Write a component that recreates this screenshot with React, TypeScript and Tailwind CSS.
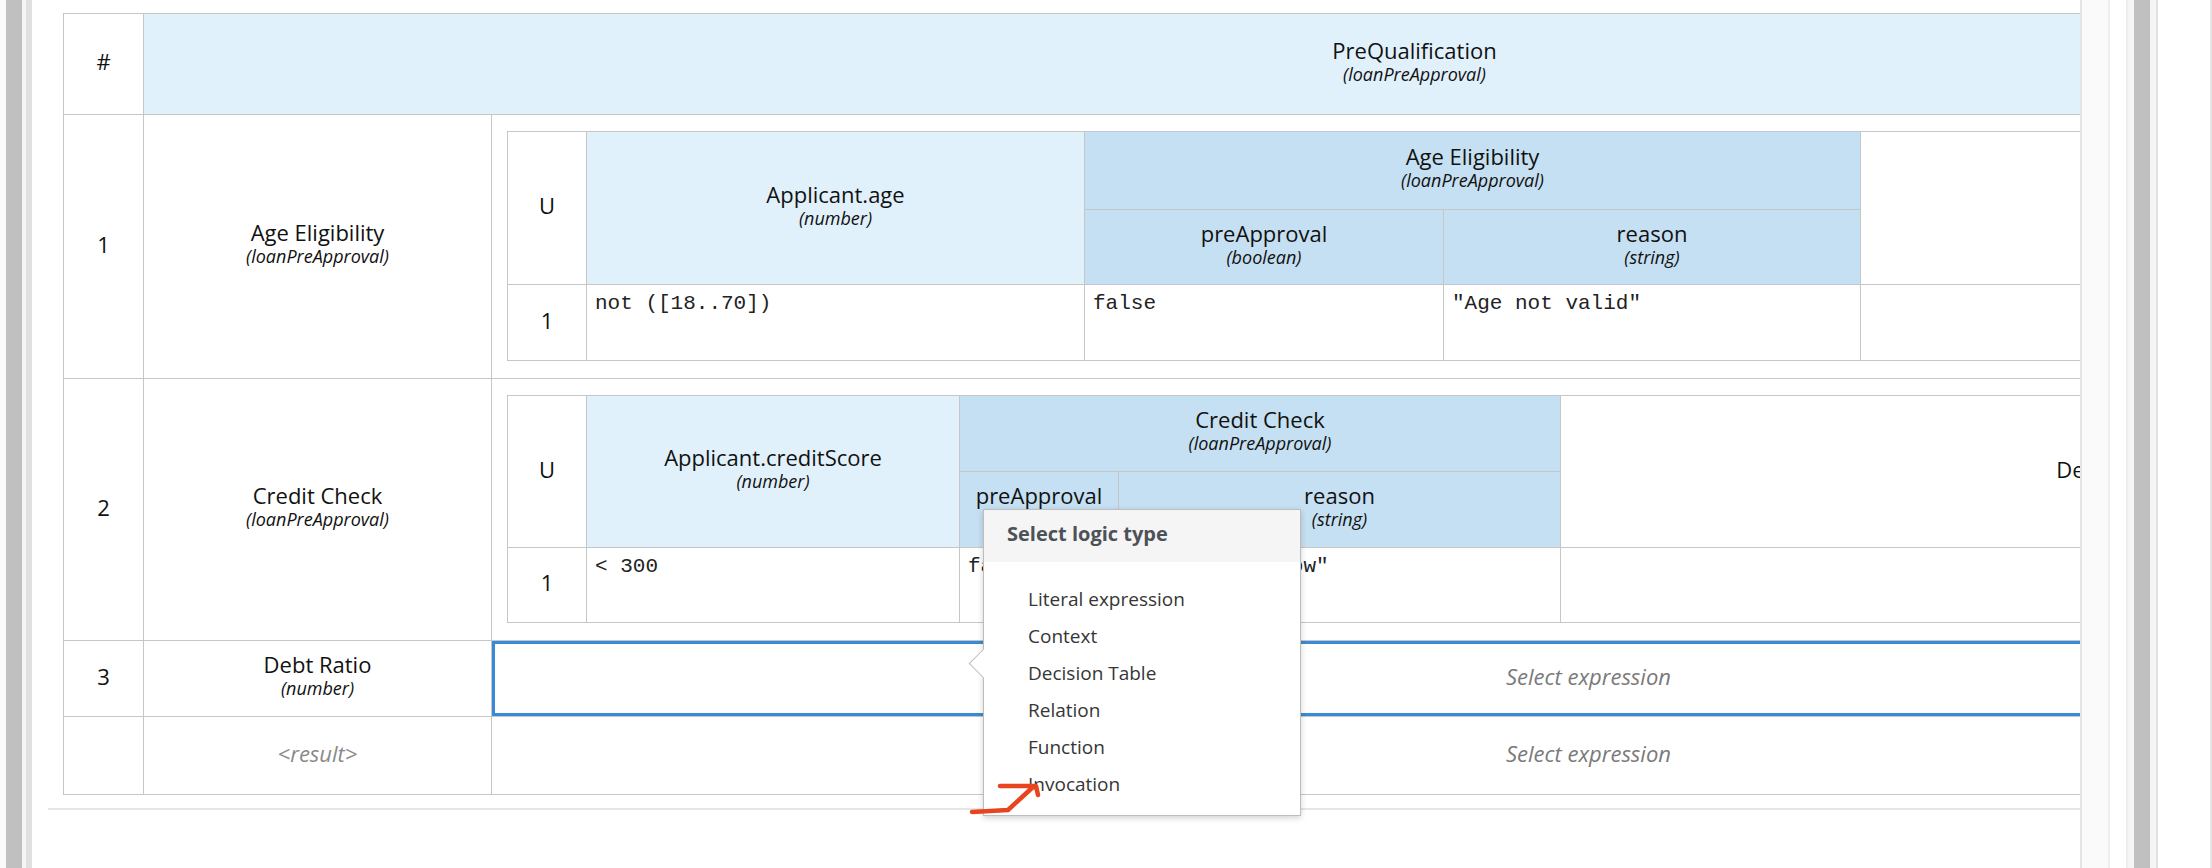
import React from "react";

const cell = "border border-[#c6c6c6]";
const inputHead = "bg-[#e1f1fc]";
const outputHead = "bg-[#c5e0f2]";
const label = "text-center text-[22px] pb-[5px]";

function Title({ name, type }: { name: string; type: string }) {
  return (
    <div className="flex flex-col items-center pb-[7px]">
      <span className="text-[22px] leading-[26px]">{name}</span>
      <span className="text-[18px] leading-[22px] italic">{type}</span>
    </div>
  );
}

const mono = "font-['Liberation_Mono',monospace] text-[21px] leading-[24px] text-[#222] align-top pt-[7px] px-[8px]";

function AgeTable() {
  return (
    <table className="table-fixed border-collapse w-full">
      <colgroup>
        <col className="w-[79px]" />
        <col className="w-[498px]" />
        <col className="w-[359px]" />
        <col className="w-[417px]" />
        <col />
      </colgroup>
      <tbody>
        <tr className="h-[78px]">
          <td rowSpan={2} className={`${cell} ${label}`}>U</td>
          <td rowSpan={2} className={`${cell} ${inputHead}`}>
            <Title name="Applicant.age" type="(number)" />
          </td>
          <td colSpan={2} className={`${cell} ${outputHead}`}>
            <Title name="Age Eligibility" type="(loanPreApproval)" />
          </td>
          <td rowSpan={2} className={`${cell} ${label}`}>Description</td>
        </tr>
        <tr className="h-[75px]">
          <td className={`${cell} ${outputHead}`}>
            <Title name="preApproval" type="(boolean)" />
          </td>
          <td className={`${cell} ${outputHead}`}>
            <Title name="reason" type="(string)" />
          </td>
        </tr>
        <tr className="h-[76px]">
          <td className={`${cell} ${label}`}>1</td>
          <td className={`${cell} ${mono}`}>not ([18..70])</td>
          <td className={`${cell} ${mono}`}>false</td>
          <td className={`${cell} ${mono}`}>"Age not valid"</td>
          <td className={cell}></td>
        </tr>
      </tbody>
    </table>
  );
}

function CreditTable() {
  return (
    <table className="table-fixed border-collapse w-full">
      <colgroup>
        <col className="w-[79px]" />
        <col className="w-[373px]" />
        <col className="w-[159px]" />
        <col className="w-[442px]" />
        <col />
      </colgroup>
      <tbody>
        <tr className="h-[76px]">
          <td rowSpan={2} className={`${cell} ${label}`}>U</td>
          <td rowSpan={2} className={`${cell} ${inputHead}`}>
            <Title name="Applicant.creditScore" type="(number)" />
          </td>
          <td colSpan={2} className={`${cell} ${outputHead}`}>
            <Title name="Credit Check" type="(loanPreApproval)" />
          </td>
          <td rowSpan={2} className={`${cell} ${label}`}>Description</td>
        </tr>
        <tr className="h-[76px]">
          <td className={`${cell} ${outputHead}`}>
            <Title name="preApproval" type="(boolean)" />
          </td>
          <td className={`${cell} ${outputHead}`}>
            <Title name="reason" type="(string)" />
          </td>
        </tr>
        <tr className="h-[75px]">
          <td className={`${cell} ${label}`}>1</td>
          <td className={`${cell} ${mono}`}>&lt; 300</td>
          <td className={`${cell} ${mono}`}>false</td>
          <td className={`${cell} ${mono}`}>"Credit too low"</td>
          <td className={cell}></td>
        </tr>
      </tbody>
    </table>
  );
}

const items = ["Literal expression", "Context", "Decision Table", "Relation", "Function", "Invocation"];

function LogicMenu() {
  return (
    <div className="absolute left-[951px] top-[509px] w-[318px] h-[307px] bg-white border border-[#bdbdbd] shadow-[0_2px_6px_rgba(0,0,0,0.18)]">
      <div className="h-[52px] bg-[#f5f5f5] pl-[23px] pb-[4px] flex items-center text-[20px] font-bold text-[#4d5258]">
        Select logic type
      </div>
      <ul className="pt-[20px] pl-[44px]">
        {items.map((item) => (
          <li key={item} className="h-[37px] leading-[35px] text-[19px] text-[#363636]">
            {item}
          </li>
        ))}
      </ul>
      <div className="absolute left-[-11px] top-[143px] w-[21px] h-[21px] bg-white border-l border-b border-[#bdbdbd] rotate-45" />
    </div>
  );
}

function Strip({ className }: { className: string }) {
  return <div className={`h-full shrink-0 ${className}`} />;
}

export default function App() {
  return (
    <div className="flex w-[2212px] h-[868px] overflow-hidden bg-white text-[#111] font-['Open_Sans',sans-serif]">
      <Strip className="w-[6px] bg-[#fafafa]" />
      <Strip className="w-[16px] bg-[#c0c0c0]" />
      <Strip className="w-[4px] bg-[#f5f5f5]" />
      <Strip className="w-[6px] bg-[#e0e0e0]" />

      <div className="relative flex-1 overflow-hidden pt-[13px]">
        <table className="ml-[31px] table-fixed border-collapse w-[2623px]">
          <colgroup>
            <col className="w-[80px]" />
            <col className="w-[348px]" />
            <col />
          </colgroup>
          <tbody>
            <tr className="h-[101px]">
              <td className={`${cell} ${label}`}>#</td>
              <td colSpan={2} className={`${cell} ${inputHead}`}>
                <Title name="PreQualification" type="(loanPreApproval)" />
              </td>
            </tr>
            <tr className="h-[263px]">
              <td className={`${cell} ${label}`}>1</td>
              <td className={cell}>
                <Title name="Age Eligibility" type="(loanPreApproval)" />
              </td>
              <td className={`${cell} px-[15px] pt-[16px] pb-[17px]`}>
                <AgeTable />
              </td>
            </tr>
            <tr className="h-[262px]">
              <td className={`${cell} ${label}`}>2</td>
              <td className={cell}>
                <Title name="Credit Check" type="(loanPreApproval)" />
              </td>
              <td className={`${cell} px-[15px] pt-[16px] pb-[17px]`}>
                <CreditTable />
              </td>
            </tr>
            <tr className="h-[76px]">
              <td className={`${cell} ${label}`}>3</td>
              <td className={cell}>
                <Title name="Debt Ratio" type="(number)" />
              </td>
              <td className={`${cell} ${label} italic text-[#7a7a7a] shadow-[inset_0_0_0_3px_#3b8ad6]`}>
                Select expression
              </td>
            </tr>
            <tr className="h-[78px]">
              <td className={cell}></td>
              <td className={`${cell} ${label} italic text-[#8a8a8a]`}>&lt;result&gt;</td>
              <td className={`${cell} ${label} italic text-[#7a7a7a]`}>Select expression</td>
            </tr>
          </tbody>
        </table>
        <div className="ml-[16px] mt-[13px] h-[2px] bg-[#e6e6e6]" />

        <LogicMenu />

        <svg className="absolute left-[928px] top-[774px]" width="92" height="50" viewBox="0 0 92 50">
          <path
            d="M12 38 L48 36 L73 13 M40 12 L76 12 L78 21"
            fill="none"
            stroke="#e8441f"
            strokeWidth="4.5"
            strokeLinecap="round"
            strokeLinejoin="round"
          />
        </svg>
      </div>

      <Strip className="w-[2px] bg-[#e5e5e5]" />
      <Strip className="w-[26px] bg-[#fafafa]" />
      <Strip className="w-[2px] bg-[#eeeeee]" />
      <Strip className="w-[16px] bg-white" />
      <Strip className="w-[2px] bg-[#eeeeee]" />
      <Strip className="w-[6px] bg-[#f5f5f5]" />
      <Strip className="w-[16px] bg-[#c0c0c0]" />
      <Strip className="w-[6px] bg-[#f5f5f5]" />
      <Strip className="w-[2px] bg-[#e0e0e0]" />
      <Strip className="w-[52px] bg-white" />
      <Strip className="w-[2px] bg-[#e5e5e5]" />
    </div>
  );
}
